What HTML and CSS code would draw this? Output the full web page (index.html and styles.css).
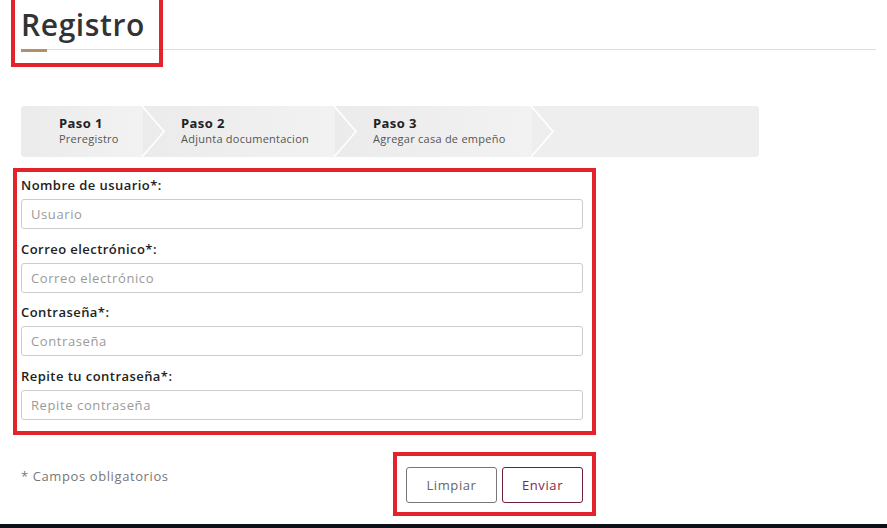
FILE: index.html
```html
<!DOCTYPE html>
<html lang="es">
<head>
<meta charset="utf-8">
<title>Registro</title>
<link rel="stylesheet" href="styles.css">
</head>
<body>
<div class="page">
  <header class="title-wrap">
    <div class="title-row">
      <h1 class="title">Registro</h1>
    </div>
    <div class="mark mark-title"></div>
  </header>

  <nav class="steps">
    <div class="step step-1">
      <div class="step-name">Paso 1</div>
      <div class="step-desc">Preregistro</div>
      <svg class="chev" viewBox="0 0 24 51" width="24" height="51"><polyline points="0,0 22,25.5 0,51" fill="none" stroke="#ffffff" stroke-width="1.6"/></svg>
    </div>
    <div class="step step-2">
      <div class="step-name">Paso 2</div>
      <div class="step-desc">Adjunta documentacion</div>
      <svg class="chev" viewBox="0 0 24 51" width="24" height="51"><polyline points="0,0 22,25.5 0,51" fill="none" stroke="#ffffff" stroke-width="1.6"/></svg>
    </div>
    <div class="step step-3">
      <div class="step-name">Paso 3</div>
      <div class="step-desc">Agregar casa de empeño</div>
      <svg class="chev" viewBox="0 0 24 51" width="24" height="51"><polyline points="0,0 22,25.5 0,51" fill="none" stroke="#ffffff" stroke-width="1.6"/></svg>
    </div>
    <div class="step step-rest"></div>
  </nav>

  <form class="form-box">
    <label class="label" for="u">Nombre de usuario*:</label>
    <input class="input" id="u" type="text" placeholder="Usuario">
    <label class="label" for="c">Correo electrónico*:</label>
    <input class="input" id="c" type="text" placeholder="Correo electrónico">
    <label class="label" for="p">Contraseña*:</label>
    <input class="input" id="p" type="password" placeholder="Contraseña">
    <label class="label" for="r">Repite tu contraseña*:</label>
    <input class="input" id="r" type="password" placeholder="Repite contraseña">
  </form>

  <div class="footer-row">
    <p class="required">* Campos obligatorios</p>
    <div class="btn-box">
      <button class="btn btn-clear" type="button">Limpiar</button>
      <button class="btn btn-send" type="button">Enviar</button>
    </div>
  </div>
</div>
<div class="bottom-bar"></div>
</body>
</html>
```

FILE: styles.css
```css
* { box-sizing: border-box; }

html, body {
  margin: 0;
  padding: 0;
  background: #ffffff;
}

body {
  font-family: "Open Sans", "DejaVu Sans", sans-serif;
  color: #222;
  height: 528px;
  overflow: hidden;
}

.page {
  padding: 0 0 0 13px;
}

/* Title */
.title-wrap {
  position: relative;
  height: 50px;
}

.title-row {
  position: relative;
  margin-left: 8px;
  width: 855px;
  height: 50px;
  border-bottom: 1px solid #dcdcdc;
}

.title-row::after {
  content: "";
  position: absolute;
  left: 0;
  bottom: -3px;
  width: 26px;
  height: 3px;
  background: #b0916a;
}

.title {
  margin: 0;
  padding-top: 5px;
  font-size: 30px;
  line-height: 40px;
  font-weight: 600;
  color: #333;
  letter-spacing: 0.6px;
}

.mark {
  border: 4px solid #e3232b;
  pointer-events: none;
}

.mark-title {
  position: absolute;
  left: -2px;
  top: -4px;
  width: 152px;
  height: 71px;
}

/* Steps */
.steps {
  display: flex;
  margin: 56px 0 0 8px;
  width: 738px;
  height: 51px;
  background: #eeeeee;
  border-radius: 4px;
  overflow: hidden;
}

.step {
  position: relative;
  padding: 9px 0 0 38px;
  background: linear-gradient(90deg, #ebebeb, #f2f2f2);
}

.step-1 { width: 122px; }
.step-2 { width: 192px; }
.step-3 { width: 197px; }
.step-rest { flex: 1; background: #eeeeee; }

.step-name {
  font-size: 13px;
  font-weight: 700;
  line-height: 16px;
  color: #222;
  letter-spacing: 0.4px;
}

.step-desc {
  font-size: 11px;
  line-height: 15px;
  color: #555;
  letter-spacing: 0.25px;
}

.chev {
  position: absolute;
  top: 0;
  right: -23px;
  z-index: 1;
}

/* Form */
.form-box {
  display: flex;
  flex-direction: column;
  margin-top: 11px;
  width: 583px;
  border: 4px solid #e3232b;
  padding: 4px 9px 11px 4px;
}

.label {
  font-size: 13px;
  font-weight: 600;
  line-height: 18px;
  color: #222;
  margin-bottom: 5px;
  letter-spacing: 0.45px;
}

.input {
  height: 30px;
  border: 1px solid #cccccc;
  border-radius: 3px;
  padding: 0 9px;
  font-family: inherit;
  font-size: 13px;
  letter-spacing: 0.6px;
  color: #555;
  margin-bottom: 10.5px;
  outline: none;
}

.input:last-child { margin-bottom: 0; }

.input::placeholder { color: #9a9a9a; }

/* Footer */
.footer-row {
  display: flex;
  align-items: flex-start;
  margin-top: 17px;
  padding-left: 8px;
}

.required {
  margin: 0;
  padding-top: 15px;
  width: 372px;
  font-size: 13px;
  line-height: 18px;
  color: #777;
  letter-spacing: 0.6px;
}

.btn-box {
  display: flex;
  gap: 5px;
  border: 4px solid #e3232b;
  padding: 11px 9px 9px 9px;
}

.btn {
  height: 36px;
  background: #fff;
  border-radius: 3px;
  font-family: inherit;
  font-size: 13px;
  letter-spacing: 0.6px;
  cursor: pointer;
}

.btn-clear {
  width: 91px;
  border: 1px solid #777;
  color: #666;
}

.btn-send {
  width: 81px;
  border: 1px solid #6f1d40;
  color: #7a2a4d;
}

.bottom-bar {
  position: fixed;
  left: 0;
  right: 0;
  bottom: 0;
  height: 4px;
  background: #0d1117;
}
```
